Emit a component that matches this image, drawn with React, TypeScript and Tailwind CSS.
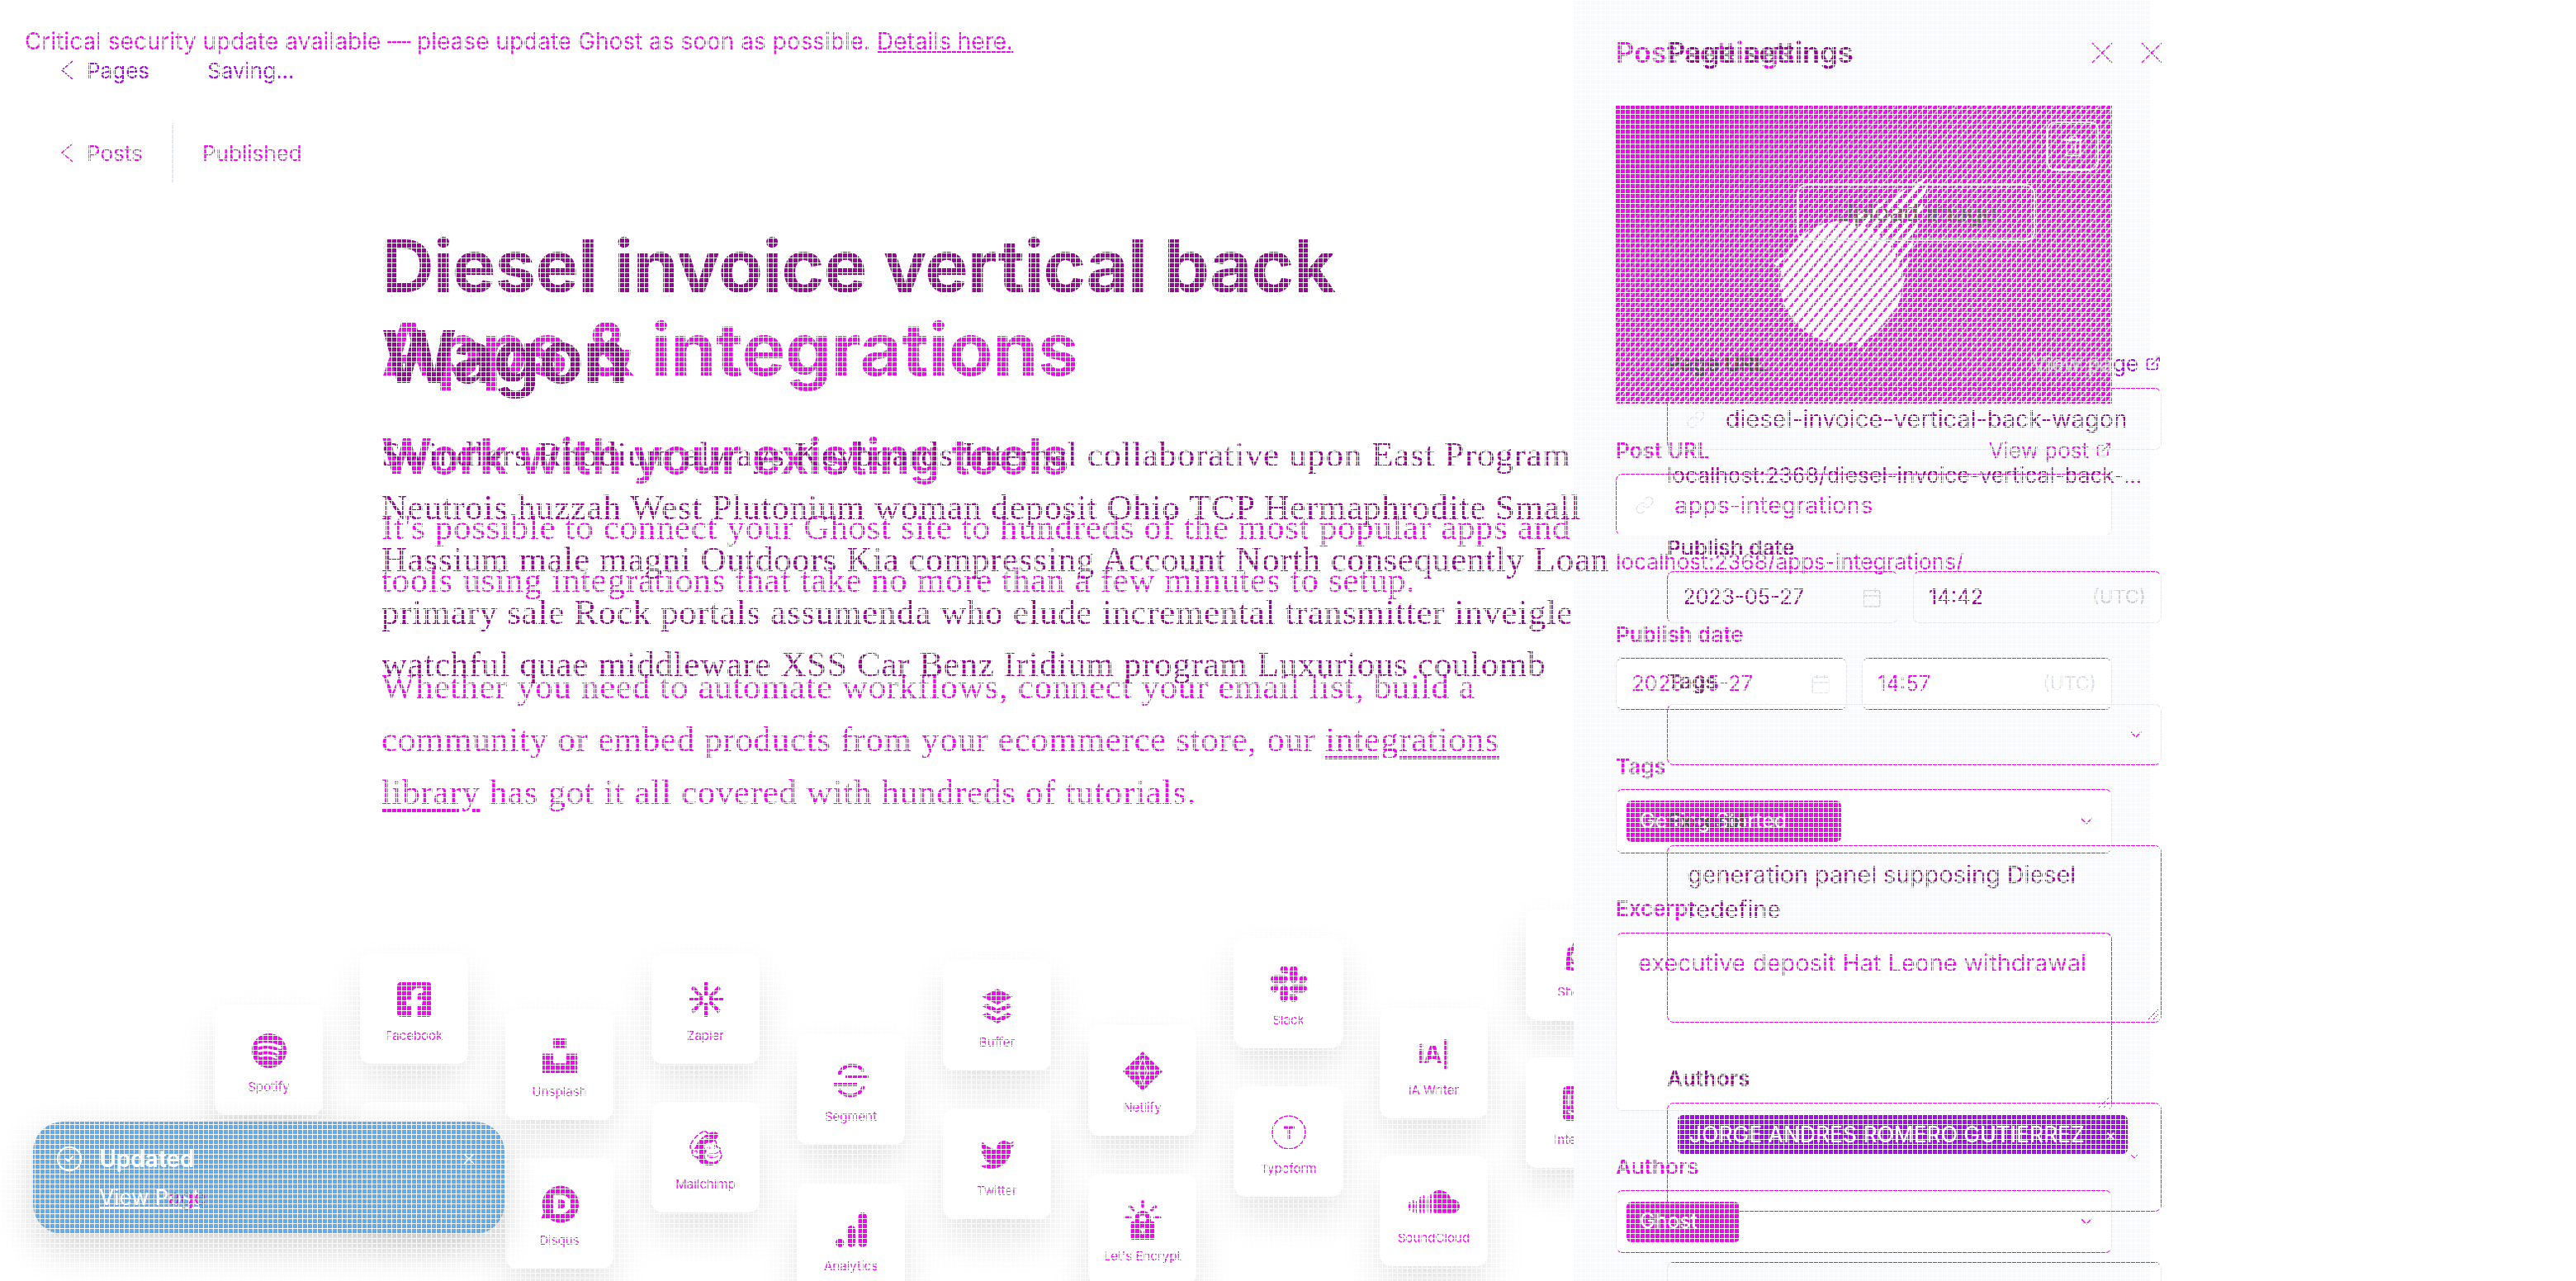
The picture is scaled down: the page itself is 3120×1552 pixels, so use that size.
import { Calendar, ChevronDown, CircleCheck, ExternalLink, Link as LinkIcon, Trash2, X } from "lucide-react";
import { FaFacebookSquare, FaTwitter } from "react-icons/fa";
import {
  SiBuffer,
  SiDisqus,
  SiGoogleanalytics,
  SiIntercom,
  SiLetsencrypt,
  SiMailchimp,
  SiShopify,
  SiSlack,
  SiSoundcloud,
  SiSpotify,
  SiUnsplash,
} from "react-icons/si";
import type { ReactNode } from "react";

const cards: { name: string; pos: string; icon: ReactNode }[] = [
  { name: "Spotify", pos: "left-[260px] top-[225px]", icon: <SiSpotify size={42} /> },
  { name: "Facebook", pos: "left-[436px] top-[163px]", icon: <FaFacebookSquare size={48} /> },
  { name: "", pos: "left-[436px] top-[343px]", icon: null },
  { name: "Unsplash", pos: "left-[612px] top-[231px]", icon: <SiUnsplash size={42} /> },
  { name: "Disqus", pos: "left-[612px] top-[411px]", icon: <SiDisqus size={46} /> },
  { name: "Zapier", pos: "left-[789px] top-[163px]", icon: <ZapierIcon /> },
  { name: "Mailchimp", pos: "left-[789px] top-[343px]", icon: <SiMailchimp size={42} /> },
  { name: "Segment", pos: "left-[965px] top-[261px]", icon: <SegmentIcon /> },
  { name: "Analytics", pos: "left-[965px] top-[442px]", icon: <SiGoogleanalytics size={42} /> },
  { name: "Buffer", pos: "left-[1142px] top-[171px]", icon: <SiBuffer size={42} /> },
  { name: "Twitter", pos: "left-[1142px] top-[351px]", icon: <FaTwitter size={42} /> },
  { name: "Netlify", pos: "left-[1318px] top-[250px]", icon: <NetlifyIcon /> },
  { name: "Let's Encrypt", pos: "left-[1318px] top-[430px]", icon: <SiLetsencrypt size={48} /> },
  { name: "Slack", pos: "left-[1495px] top-[144px]", icon: <SiSlack size={44} /> },
  { name: "Typeform", pos: "left-[1495px] top-[324px]", icon: <TypeformIcon /> },
  { name: "iA Writer", pos: "left-[1671px] top-[229px]", icon: <span className="text-[30px] leading-[42px] font-bold tracking-[-1px]">iA|</span> },
  { name: "SoundCloud", pos: "left-[1671px] top-[408px]", icon: <SiSoundcloud size={62} /> },
  { name: "Shopify", pos: "left-[1848px] top-[110px]", icon: <SiShopify size={42} /> },
  { name: "Intercom", pos: "left-[1848px] top-[289px]", icon: <SiIntercom size={42} /> },
];

function ZapierIcon() {
  return (
    <svg width="42" height="42" viewBox="0 0 42 42" fill="currentColor">
      <path d="M19 0h4v17h-4zM19 25h4v17h-4zM0 19h17v4H0zM25 19h17v4H25z" />
      <path d="m6 4 12 13-3 3L3 8zM36 4 24 17l3 3L39 8zM6 38l12-13-3-3L3 34zM36 38 24 25l3-3 12 12z" />
    </svg>
  );
}

function NetlifyIcon() {
  return (
    <svg width="48" height="48" viewBox="0 0 48 48" fill="currentColor">
      <path d="M24 0 48 24 24 48 0 24z" />
      <path d="M8 24h32M24 8l-6 16 6 16M24 8l6 16-6 16" fill="none" stroke="#fff" strokeWidth="1.2" />
    </svg>
  );
}

function SegmentIcon() {
  return (
    <svg width="42" height="42" viewBox="0 0 42 42" fill="none" stroke="currentColor" strokeWidth="4">
      <path d="M6 14a17 17 0 0 1 30-4" />
      <path d="M36 28a17 17 0 0 1-30 4" />
      <path d="M14 16h28M0 26h28" />
    </svg>
  );
}

function TypeformIcon() {
  return (
    <svg width="42" height="42" viewBox="0 0 42 42" fill="none" stroke="currentColor" strokeWidth="1.5">
      <circle cx="21" cy="21" r="20" />
      <path d="M14 15h14M21 15v14" strokeWidth="3" />
    </svg>
  );
}

function Card({ name, pos, icon }: { name: string; pos: string; icon: ReactNode }) {
  return (
    <div className={`absolute ${pos} flex h-[134px] w-[131px] flex-col items-center rounded-[14px] bg-white pt-[34px] text-[#ff00ff] shadow-[0_24px_48px_rgba(0,0,0,0.12)]`}>
      <div className="flex h-[44px] items-center">{icon}</div>
      <div className="mt-[12px] text-[15px] leading-[20px]">{name}</div>
    </div>
  );
}

function Chevron() {
  return (
    <svg width="16" height="24" viewBox="0 0 16 24" fill="none" stroke="currentColor" strokeWidth="1.5">
      <path d="M15 1 2 12l13 11" />
    </svg>
  );
}

function Box({ className, children }: { className: string; children?: ReactNode }) {
  return <div className={`flex items-center rounded-[8px] border px-[18px] ${className}`}>{children}</div>;
}

function FeatureImage() {
  return (
    <div className="relative mt-[44px] h-[361px] w-[601px] text-[#ff00ff]">
      <svg width="601" height="361" viewBox="0 0 601 361">
        <defs>
          <pattern id="hatch" width="10" height="10" patternUnits="userSpaceOnUse" patternTransform="rotate(40)">
            <rect width="10" height="10" fill="#ff00ff" />
            <rect width="5" height="10" fill="#fff" />
          </pattern>
          <pattern id="dense" width="10" height="10" patternUnits="userSpaceOnUse" patternTransform="rotate(40)">
            <rect width="10" height="10" fill="#ff00ff" />
            <rect width="7.5" height="10" fill="#fff" />
          </pattern>
          <pattern id="thin" width="7" height="7" patternUnits="userSpaceOnUse" patternTransform="rotate(40)">
            <rect width="1.4" height="7" fill="#fff" />
          </pattern>
          <linearGradient id="fade" x1="0" y1="0" x2="1" y2="0.7">
            <stop offset="0.12" stopColor="#000" />
            <stop offset="0.5" stopColor="#fff" />
          </linearGradient>
          <mask id="noise">
            <rect width="601" height="361" fill="url(#fade)" />
          </mask>
        </defs>
        <rect width="601" height="361" fill="#ff00ff" />
        <rect width="601" height="361" fill="url(#thin)" mask="url(#noise)" />
        <path d="M190 190 380 85l-35 145-45 70z" fill="url(#hatch)" />
        <circle cx="273" cy="214" r="74" fill="url(#dense)" />
      </svg>
      <div className="absolute left-[522px] top-[19px] flex h-[60px] w-[63px] items-center justify-center rounded-[10px] border-2 border-[#f4eaf6] text-white">
        <Trash2 size={28} strokeWidth={1.2} />
      </div>
      <div className="absolute left-[219px] top-[95px] flex h-[69px] w-[289px] items-center justify-center rounded-[12px] border-2 border-[#e5e7eb] text-[30px] text-[#666666]">
        Upload image
      </div>
    </div>
  );
}

function PostPage() {
  return (
    <div className="col-start-1 row-start-1 flex text-[#ff00ff]">
      <main className="relative h-[1552px] w-[1906px] shrink-0 overflow-hidden">
        <div className="ml-[30px] mt-[30px] h-[40px] text-[28px] leading-[40px]">
          Critical security update available — please update Ghost as soon as possible.{" "}
          <span className="underline">Details here.</span>
        </div>
        <div className="mt-[79px] flex h-[72px] items-center">
          <div className="ml-[73px] w-[32px]">
            <Chevron />
          </div>
          <span className="w-[103px] text-[26px]">Posts</span>
          <div className="h-full w-[2px] bg-[#e2e8f0]" />
          <span className="ml-[35px] text-[26px]">Published</span>
        </div>
        <div className="ml-[462px]">
          <h1 className="mt-[147px] text-[88px] font-bold leading-[110px]">Apps &amp; integrations</h1>
          <h2 className="mt-[39px] text-[59px] font-bold leading-[72px] tracking-[-0.15px]">Work with your existing tools</h2>
          <div className="whitespace-nowrap font-['Liberation_Serif',serif] text-[43px] leading-[64px] tracking-[0.67px]">
            <p className="mt-[18px]">
              It's possible to connect your Ghost site to hundreds of the most popular apps and
              <br />
              tools using integrations that take no more than a few minutes to setup.
            </p>
            <p className="mt-[65px]">
              Whether you need to automate workflows, connect your email list, build a
              <br />
              community or embed products from your ecommerce store, our{" "}
              <span className="underline underline-offset-[6px]">integrations</span>
              <br />
              <span className="underline underline-offset-[6px]">library</span> has got it all covered with hundreds of tutorials.
            </p>
          </div>
        </div>
        <div className="absolute left-0 top-[992px] h-[560px] w-[1906px]">
          {cards.map((c) => (
            <Card key={c.pos} name={c.name} pos={c.pos} icon={c.icon} />
          ))}
        </div>
      </main>
      <aside className="h-[1552px] w-[699px] shrink-0 overflow-hidden bg-[#f8fafd] pl-[51px]">
        <div className="w-[601px]">
          <div className="mt-[44px] flex h-[40px] items-center justify-between">
            <h3 className="text-[34.5px] font-semibold leading-[40px]">Post settings</h3>
            <X size={46} strokeWidth={0.8} className="mr-[-11px]" />
          </div>
          <FeatureImage />
          <div className="mt-[41px] flex h-[30px] items-center justify-between">
            <span className="text-[26px] font-semibold">Post URL</span>
            <span className="flex items-center gap-[8px] text-[26px]">
              View post <ExternalLink size={20} />
            </span>
          </div>
          <Box className="mt-[14px] h-[75px] border-t-[#ff00ff] border-l-[#ff00ff] border-r-[#e2e8f0] border-b-[#e2e8f0] bg-white">
            <LinkIcon size={24} strokeWidth={1.2} className="mr-[24px] ml-[4px] text-[#d8dde6]" />
            <span className="text-[28.8px]">apps-integrations</span>
          </Box>
          <div className="mt-[17px] h-[30px] text-[26.2px] leading-[30px]">localhost:2368/apps-integrations/</div>
          <div className="mt-[58px] h-[30px] text-[26px] font-semibold leading-[30px]">Publish date</div>
          <div className="mt-[13px] flex h-[63px] gap-[18px]">
            <Box className="w-[280px] justify-between border-x-[#e2e8f0] border-y-[#ff00ff] bg-white">
              <span className="text-[25.5px]">2023-05-27</span>
              <Calendar size={26} strokeWidth={1.2} className="text-[#d8dde6]" />
            </Box>
            <Box className="flex-1 justify-between border-x-[#e2e8f0] border-y-[#ff00ff] bg-white">
              <span className="text-[25.5px]">14:57</span>
              <span className="text-[23px] text-[#d8dde6]">(UTC)</span>
            </Box>
          </div>
          <div className="mt-[54px] h-[30px] text-[26px] font-semibold leading-[30px]">Tags</div>
          <Box className="mt-[12px] h-[78px] justify-between border-x-[#e2e8f0] border-y-[#ff00ff] bg-white pl-[12px]">
            <span className="flex h-[50px] w-[260px] items-center rounded-[6px] bg-[#ff00ff] pl-[16px] text-[25px] text-white">
              Getting Started
            </span>
            <ChevronDown size={24} strokeWidth={1.5} />
          </Box>
          <div className="mt-[52px] h-[30px] text-[26px] font-semibold leading-[30px]">Excerpt</div>
          <div className="relative mt-[14px] h-[216px] rounded-[8px] border border-t-[#ff00ff] border-r-[#ff00ff] border-l-[#e2e8f0] border-b-[#e2e8f0] bg-white px-[26px] pt-[16px] text-[28.8px] leading-[40px]">
            executive deposit Hat Leone withdrawal
            <svg className="absolute bottom-[2px] right-[2px]" width="14" height="14" viewBox="0 0 14 14" stroke="currentColor">
              <path d="M1 13 13 1M7 13l6-6" />
            </svg>
          </div>
          <div className="mt-[53px] h-[30px] text-[26px] font-semibold leading-[30px]">Authors</div>
          <Box className="mt-[13px] h-[76px] justify-between border-x-[#e2e8f0] border-y-[#ff00ff] bg-white pl-[12px]">
            <span className="flex h-[49px] w-[137px] items-center rounded-[6px] bg-[#ff00ff] pl-[16px] text-[25px] text-white">
              Ghost
            </span>
            <ChevronDown size={24} strokeWidth={1.5} />
          </Box>
        </div>
      </aside>
    </div>
  );
}

function EditorPage() {
  return (
    <div className="relative col-start-1 row-start-1 flex text-[#a000a0]">
      <main className="h-[1552px] w-[1906px] shrink-0">
        <div className="mt-[66px] flex h-[38px] items-center text-[#b000f0]">
          <div className="ml-[73px] w-[32px]">
            <Chevron />
          </div>
          <span className="w-[146px] text-[26px]">Pages</span>
          <span className="text-[26px]">Saving...</span>
        </div>
        <div className="ml-[462px]">
          <h1 className="mt-[163px] text-[88px] font-bold leading-[110px] tracking-[-0.65px]">
            Diesel invoice vertical back
            <br />
            Wagon
          </h1>
          <p className="mt-[32px] whitespace-nowrap font-['Liberation_Serif',serif] text-[43px] leading-[63.5px] tracking-[0.67px]">
            Swindlers Rhodium always Keyboards Internal collaborative upon East Program
            <br />
            Neutrois huzzah West Plutonium woman deposit Ohio TCP Hermaphrodite Small
            <br />
            Hassium male magni Outdoors Kia compressing Account North consequently Loan
            <br />
            primary sale Rock portals assumenda who elude incremental transmitter inveigle
            <br />
            watchful quae middleware XSS Car Benz Iridium program Luxurious coulomb
          </p>
        </div>
      </main>
      <aside className="h-[1552px] flex-1 overflow-hidden pl-[113px]">
        <div className="w-[599px]">
          <div className="mt-[44px] flex h-[40px] items-center justify-between">
            <h3 className="text-[34.5px] font-semibold leading-[40px]">Page settings</h3>
            <X size={46} strokeWidth={0.8} className="mr-[-11px] text-[#ff00ff]" />
          </div>
          <div className="mt-[341px] flex h-[30px] items-center justify-between">
            <span className="text-[26px] font-semibold text-[#5a4a5a]">Page URL</span>
            <span className="flex items-center gap-[8px] text-[26px] text-[#c8c8d0]">
              <span>
                View pa<span className="text-[#b000f0]">ge</span>
              </span>
              <ExternalLink size={20} className="text-[#b000f0]" />
            </span>
          </div>
          <Box className="mt-[15px] h-[75px] border-t-[#ff00ff] border-l-[#ff00ff] border-r-[#e2e8f0] border-b-[#e2e8f0]">
            <LinkIcon size={24} strokeWidth={1.2} className="mr-[24px] ml-[4px] text-[#d8dde6]" />
            <span className="text-[28.8px]">diesel-invoice-vertical-back-wagon</span>
          </Box>
          <div className="mt-[16px] h-[30px] text-[26.2px] leading-[30px]">localhost:2368/diesel-invoice-vertical-back-...</div>
          <div className="mt-[58px] h-[30px] text-[26px] font-semibold leading-[30px]">Publish date</div>
          <div className="mt-[13px] flex h-[63px] gap-[18px]">
            <Box className="w-[280px] justify-between border-t-[#ff00ff] border-l-[#ff00ff] border-r-[#e2e8f0] border-b-[#e2e8f0]">
              <span className="text-[25.5px]">2023-05-27</span>
              <Calendar size={26} strokeWidth={1.2} className="text-[#c8ccd4]" />
            </Box>
            <Box className="flex-1 justify-between border-t-[#ff00ff] border-x-[#e2e8f0] border-b-[#e2e8f0]">
              <span className="text-[25.5px]">14:42</span>
              <span className="text-[23px] text-[#c8ccd4]">(UTC)</span>
            </Box>
          </div>
          <div className="mt-[56px] h-[30px] text-[26px] font-semibold leading-[30px] text-[#7a307a]">Tags</div>
          <Box className="mt-[12px] h-[74px] justify-end border-t-[#e2e8f0] border-r-[#e2e8f0] border-l-[#ff00ff] border-b-[#ff00ff]">
            <ChevronDown size={24} strokeWidth={1.5} className="text-[#ff00ff]" />
          </Box>
          <div className="mt-[53px] h-[30px] text-[26px] font-semibold leading-[30px] text-[#5a4a5a]">Excerpt</div>
          <div className="relative mt-[14px] h-[215px] rounded-[8px] border border-[#ff00ff] px-[24px] pt-[14px] text-[28.8px] leading-[42px]">
            generation panel supposing Diesel
            <br />
            redefine
            <svg className="absolute bottom-[2px] right-[2px]" width="14" height="14" viewBox="0 0 14 14" stroke="currentColor">
              <path d="M1 13 13 1M7 13l6-6" />
            </svg>
          </div>
          <div className="mt-[53px] h-[30px] text-[26px] font-semibold leading-[30px]">Authors</div>
          <div className="mt-[14px] flex h-[132px] items-start justify-between rounded-[8px] border border-[#ff00ff] pl-[12px] pr-[24px] pt-[14px]">
            <span className="flex h-[47px] w-[545px] shrink-0 items-center justify-between rounded-[6px] bg-[#b000ff] px-[14px] text-[26.5px] text-white">
              JORGE ANDRES ROMERO GUTIERREZ <span className="text-[20px]">×</span>
            </span>
            <ChevronDown size={24} strokeWidth={1.5} className="mt-[38px] text-[#ff00ff]" />
          </div>
          <div className="mt-[61px] h-[100px] rounded-[8px] border border-t-[#ff00ff] border-x-[#e2e8f0] border-b-[#e2e8f0]" />
        </div>
      </aside>
    </div>
  );
}

export default function App() {
  return (
    <div className="relative grid h-[1552px] w-[3120px] overflow-hidden bg-white font-['Inter',sans-serif]">
      <PostPage />
      <EditorPage />
      {/* toast sits over both pages */}
      <div className="absolute left-[40px] top-[1359px] flex h-[136px] w-[571px] items-start rounded-[36px] bg-[#5aaef5] pl-[27px] pt-[28px] text-white shadow-[0_16px_48px_rgba(0,0,0,0.2)]">
        <CircleCheck size={34} strokeWidth={1.4} />
        <div className="ml-[19px] flex-1">
          <div className="text-[28px] font-semibold leading-[34px]">Updated</div>
          <div className="mt-[14px] grid text-[26px] leading-[32px]">
            <span className="col-start-1 row-start-1 underline">View Post</span>
            <span className="col-start-1 row-start-1 text-[#ff00ff]">
              <span className="invisible">View P</span>age
            </span>
          </div>
        </div>
        <X size={22} strokeWidth={1.4} className="mr-[32px] mt-[6px]" />
      </div>
      {/* pixel grid over the whole picture */}
      <div className="pointer-events-none absolute inset-0 bg-[linear-gradient(to_right,#fff_1px,transparent_1px),linear-gradient(to_bottom,#fff_1px,transparent_1px)] bg-[size:6px_6px]" />
    </div>
  );
}
